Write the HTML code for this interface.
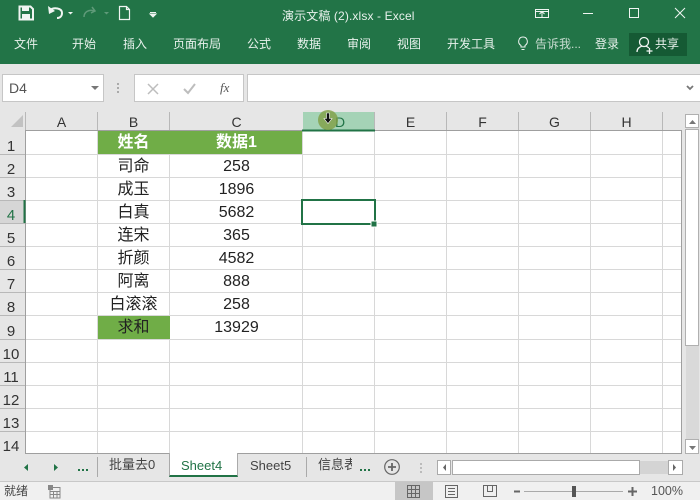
<!DOCTYPE html>
<html><head><meta charset="utf-8"><style>
html,body{margin:0;padding:0}
#p{position:relative;width:700px;height:500px;overflow:hidden;background:#e6e6e6;font-family:"Liberation Sans","Noto Sans CJK SC",sans-serif;color:#222}
.a{position:absolute;white-space:nowrap}
.r{color:#e8f1ec;font-size:12px;top:36px;line-height:16px}
.h{top:113px;height:17px;line-height:18px;font-size:14px;text-align:center;color:#333}
.n{left:0;width:22px;text-align:center;font-size:15px;line-height:20px;color:#333}
.c{text-align:center;font-size:16px;line-height:22px;color:#222}
.b{left:97px;width:73px}.d{left:169px;width:135px}
</style></head><body><div id="p">
<div class="a" style="left:0;top:0;width:700px;height:64px;background:#227447"></div>
<svg class="a" style="left:0;top:0" width="700" height="64" fill="none" stroke="#f0f5f2">
<path d="M19.500 6.500h11l2.500 2.500v10.500h-13.500z" stroke-width="2"/><rect x="22" y="7" width="7" height="4" fill="#f0f5f2" stroke="none"/><rect x="22" y="14" width="8" height="5" fill="#f0f5f2" stroke="none"/>
<path d="M50 10c4-3 12-2 12 3 0 3-2 5-5 5" stroke-width="2"/><path d="M48 6l1 8 6-3z" fill="#f0f5f2" stroke="none"/>
<path d="M68 12l5 0-2.500 2.500z" fill="#f0f5f2" stroke="none"/>
<path d="M84 17c0-5 5-8 10-6M92 7l3 4-4 2" stroke="#5f9a79" stroke-width="1.500"/><path d="M104 12h5l-2.500 2.500z" fill="#5f9a79" stroke="none"/>
<path d="M119.500 6.500h7l3 3v10h-10zM126.500 6.500v3h3" stroke-width="1.200"/>
<path d="M150 12.500h6M150 14h6l-3 3z" fill="#f0f5f2" stroke-width="1"/>
<rect x="535.500" y="9.500" width="13" height="8" stroke-width="1"/><path d="M542 17v-5M539.500 14l2.500-2.500 2.500 2.500M535 11.500h14" stroke-width="1"/>
<path d="M583 13.500h10" stroke-width="1"/><rect x="629.500" y="8.500" width="9" height="9" stroke-width="1"/><path d="M675 8l10 10M685 8l-10 10" stroke-width="1"/>
<path d="M521 47v-1.500c-4-2.500-2.500-8.500 2-8.500s6 6 2 8.500v1.500zM521.500 49.500h3" stroke-width="1"/>
</svg>
<div class="a" style="left:282px;top:8px;font-size:12px;letter-spacing:.12px;line-height:16px;color:#e8f1ec">演示文稿 (2).xlsx - Excel</div>
<div class="a r" style="left:14px">文件</div><div class="a r" style="left:72px">开始</div><div class="a r" style="left:123px">插入</div><div class="a r" style="left:173px">页面布局</div><div class="a r" style="left:247px">公式</div><div class="a r" style="left:297px">数据</div><div class="a r" style="left:347px">审阅</div><div class="a r" style="left:397px">视图</div><div class="a r" style="left:447px">开发工具</div><div class="a r" style="left:535px;color:#c9dcd1">告诉我...</div><div class="a r" style="left:595px">登录</div>
<div class="a" style="left:629px;top:33px;width:58px;height:23px;background:#155a34"></div>
<svg class="a" style="left:633px;top:33px" width="24" height="23" fill="none" stroke="#f0f5f2" stroke-width="1.300"><circle cx="11" cy="9" r="4.500"/><path d="M4 19c0-4 3-5 5-6M13 13l3 2M13.500 18h6M16.500 15v6"/></svg>
<div class="a r" style="left:655px">共享</div>

<div class="a" style="left:0;top:64px;width:700px;height:48px;background:#e6e6e6"></div>
<div class="a" style="left:2px;top:74px;width:100px;height:26px;background:#fff;border:1px solid #c6c6c6"></div>
<div class="a" style="left:9px;top:79px;font-size:14px;line-height:18px;color:#555">D4</div>
<div class="a" style="left:134px;top:74px;width:108px;height:26px;background:#fff;border:1px solid #c6c6c6"></div>
<div class="a" style="left:220px;top:79px;font:italic 13px/18px 'Liberation Serif',serif;color:#555">fx</div>
<div class="a" style="left:247px;top:74px;width:453px;height:26px;background:#fff;border:1px solid #c6c6c6;border-right:0"></div>
<svg class="a" style="left:0;top:64px" width="700" height="48" fill="none">
<path d="M91 22h8l-4 4z" fill="#777"/><path d="M117 19h2v2h-2zM117 23h2v2h-2zM117 27h2v2h-2z" fill="#aaa"/>
<path d="M148 20l10 10M158 20l-10 10" stroke="#bdbdbd" stroke-width="1.500"/><path d="M184 25l4 4 7-9" stroke="#bdbdbd" stroke-width="2"/>
<path d="M687 22l3 3 3-3" stroke="#777" stroke-width="1.800"/>
</svg>

<div class="a" style="left:25px;top:130px;width:657px;height:323px;background:#fff"></div>
<div class="a" style="left:97px;top:130px;width:72px;height:24px;background:#70ad47"></div>
<div class="a" style="left:169px;top:130px;width:133px;height:24px;background:#70ad47"></div>
<div class="a" style="left:97px;top:316px;width:73px;height:24px;background:#70ad47"></div>
<div class="a" style="left:303px;top:112px;width:72px;height:18px;background:#a5d3b6"></div>
<div class="a" style="left:0;top:200px;width:25px;height:23px;background:#d6d6d6"></div>
<svg class="a" style="left:0;top:0" width="700" height="500" fill="none" shape-rendering="crispEdges">
<g stroke="#d8d8d8">
<path d="M25 154.500H682M25 177.500H682M25 200.500H682M25 223.500H682M25 246.500H682M25 269.500H682M25 292.500H682M25 315.500H682M25 339.500H682M25 362.500H682M25 385.500H682M25 408.500H682M25 431.500H682"/>
<path d="M97.500 154V453M169.500 154V316M169.500 340V453M302.500 130V453M374.500 130V453M446.500 130V453M518.500 130V453M590.500 130V453M662.500 130V453M97.500 130V154"/>
</g>
<g stroke="#b8b8b8">
<path d="M0 154.500H25M0 177.500H25M0 200.500H25M0 223.500H25M0 246.500H25M0 269.500H25M0 292.500H25M0 315.500H25M0 339.500H25M0 362.500H25M0 385.500H25M0 408.500H25M0 431.500H25"/>
<path d="M25.500 112V130M97.500 112V130M169.500 112V130M374.500 112V130M446.500 112V130M518.500 112V130M590.500 112V130M662.500 112V130"/>
</g>
<path d="M25 130.500H682M25.500 130V453M25 453.500H682M681.500 130V453" stroke="#9f9f9f"/>
<path d="M302 130.500H375" stroke="#217346" stroke-width="2"/>
<path d="M24.500 200V223" stroke="#217346" stroke-width="2"/>
<rect x="302" y="200" width="73" height="24" stroke="#217346" stroke-width="2"/>
<rect x="371" y="221" width="6" height="6" fill="#217346" stroke="#fff" stroke-width="1"/>
<path d="M11 127h12v-12z" fill="#c2c2c2" shape-rendering="auto"/>
</svg>
<div class="a h" style="left:25px;width:73px">A</div><div class="a h" style="left:97px;width:73px">B</div><div class="a h" style="left:169px;width:135px">C</div><div class="a h" style="left:302px;width:72px;color:#217346;padding-left:2px">D</div><div class="a h" style="left:374px;width:73px">E</div><div class="a h" style="left:446px;width:73px">F</div><div class="a h" style="left:518px;width:73px">G</div><div class="a h" style="left:590px;width:73px">H</div>
<svg class="a" style="left:314px;top:108px" width="28" height="26"><circle cx="14" cy="12" r="10" fill="#7f9f45" fill-opacity=".8"/><path d="M12.500 5h3v5.500h2.500L14 15.500 10 10.500h2.500z" fill="#111" stroke="#fff" stroke-width=".6"/></svg>

<div class="a n" style="top:137px">1</div><div class="a n" style="top:160px">2</div><div class="a n" style="top:183px">3</div><div class="a n" style="top:206px;color:#217346">4</div><div class="a n" style="top:229px">5</div><div class="a n" style="top:252px">6</div><div class="a n" style="top:275px">7</div><div class="a n" style="top:298px">8</div><div class="a n" style="top:322px">9</div><div class="a n" style="top:345px">10</div><div class="a n" style="top:368px">11</div><div class="a n" style="top:391px">12</div><div class="a n" style="top:414px">13</div><div class="a n" style="top:437px">14</div>

<div class="a c b" style="top:132px;color:#fff;font-weight:bold">姓名</div><div class="a c d" style="top:132px;color:#fff;font-weight:bold">数据1</div>
<div class="a c b" style="top:156px">司命</div><div class="a c d" style="top:156px">258</div>
<div class="a c b" style="top:179px">成玉</div><div class="a c d" style="top:179px">1896</div>
<div class="a c b" style="top:202px">白真</div><div class="a c d" style="top:202px">5682</div>
<div class="a c b" style="top:225px">连宋</div><div class="a c d" style="top:225px">365</div>
<div class="a c b" style="top:248px">折颜</div><div class="a c d" style="top:248px">4582</div>
<div class="a c b" style="top:271px">阿离</div><div class="a c d" style="top:271px">888</div>
<div class="a c b" style="top:294px">白滚滚</div><div class="a c d" style="top:294px">258</div>
<div class="a c b" style="top:317px">求和</div><div class="a c d" style="top:317px">13929</div>

<div class="a" style="left:686px;top:114px;width:13px;height:344px;background:#d9d9d9"></div>
<div class="a" style="left:685px;top:114px;width:14px;height:14px;background:#fff;border:1px solid #b0b0b0;box-sizing:border-box"></div>
<div class="a" style="left:685px;top:129px;width:14px;height:217px;background:#fff;border:1px solid #b0b0b0;box-sizing:border-box"></div>
<div class="a" style="left:685px;top:439px;width:14px;height:15px;background:#fff;border:1px solid #b0b0b0;box-sizing:border-box"></div>

<div class="a" style="left:0;top:454px;width:700px;height:27px;background:#e6e6e6"></div>
<div class="a" style="left:169px;top:453px;width:69px;height:24px;background:#fff;border-bottom:2px solid #217346;box-sizing:border-box;border-left:1px solid #aaa;border-right:1px solid #aaa"></div>
<svg class="a" style="left:0;top:453px" width="700" height="47" fill="none">
<path d="M28 11v7l-4-3.500zM54 11v7l4-3.500z" fill="#217346"/><path d="M78 16h2v2h-2zM82 16h2v2h-2zM86 16h2v2h-2zM360 16h2v2h-2zM364 16h2v2h-2zM368 16h2v2h-2z" fill="#217346"/>
<path d="M97.500 4v20M306.500 4v20" stroke="#aaa"/>
<circle cx="392" cy="14" r="7.300" stroke="#666" stroke-width="1.200"/><path d="M388 14h8M392 10v8" stroke="#666" stroke-width="1.800"/>
<path d="M420 10h2v2h-2zM420 14h2v2h-2zM420 18h2v2h-2z" fill="#bbb"/>
<rect x="437.500" y="7.500" width="13" height="14" fill="#fff" stroke="#aaa"/><rect x="452.500" y="7.500" width="187" height="14" fill="#fff" stroke="#aaa"/><rect x="668.500" y="7.500" width="14" height="14" fill="#fff" stroke="#aaa"/><rect x="640" y="8" width="28" height="13" fill="#d4d4d4"/>
<path d="M446 11v7l-3-3.500zM673 11v7l3-3.500z" fill="#666"/>
</svg>
<svg class="a" style="left:685px;top:114px" width="15" height="345"><path d="M4 10h7l-3.500-4z" fill="#777"/><path d="M4 332h7l-3.500 4z" fill="#777"/></svg>
<div class="a" style="left:109px;top:456px;font-size:13px;line-height:18px;color:#444">批量去0</div>
<div class="a" style="left:181px;top:457px;font-size:13px;line-height:18px;color:#217346">Sheet4</div>
<div class="a" style="left:250px;top:457px;font-size:13px;line-height:18px;color:#444">Sheet5</div>
<div class="a" style="left:318px;top:456px;width:34px;overflow:hidden;font-size:13px;line-height:18px;color:#444">信息表格</div>

<div class="a" style="left:0;top:481px;width:700px;height:19px;background:#f0f0f0;border-top:1px solid #c8c8c8;box-sizing:border-box"></div>
<div class="a" style="left:395px;top:482px;width:38px;height:18px;background:#c6c6c6"></div>
<div class="a" style="left:4px;top:483px;font-size:12px;line-height:17px;color:#444">就绪</div>
<svg class="a" style="left:0;top:481px" width="700" height="19" fill="none" stroke="#666" shape-rendering="crispEdges">
<path d="M50 6.500h10v10.500H50zM50 10.500h10M53.500 10.500v6.500M57 10.500v6.500M50 13.500h10" stroke="#888"/><rect x="48" y="4" width="5" height="5" fill="#888" stroke="none"/>
<path d="M407.500 4.500h12v12h-12zM411.500 4.500v12M415.500 4.500v12M407.500 8.500h12M407.500 12.500h12"/>
<path d="M445.500 4.500h12v12h-12zM448 7.500h7M448 10.500h7M448 13.500h7"/>
<path d="M483.500 4.500h13v11h-13zM487.500 4.500v6h5v-6"/>
<path d="M514 10.500h6" stroke-width="2"/><path d="M524 10.500h99" stroke="#aaa"/><rect x="572" y="5" width="4" height="11" fill="#555" stroke="none"/><path d="M628 10.500h9M632.500 6v9" stroke-width="2"/>
</svg>
<div class="a" style="left:651px;top:483px;font-size:12.500px;line-height:17px;color:#555">100%</div>
</div></body></html>
